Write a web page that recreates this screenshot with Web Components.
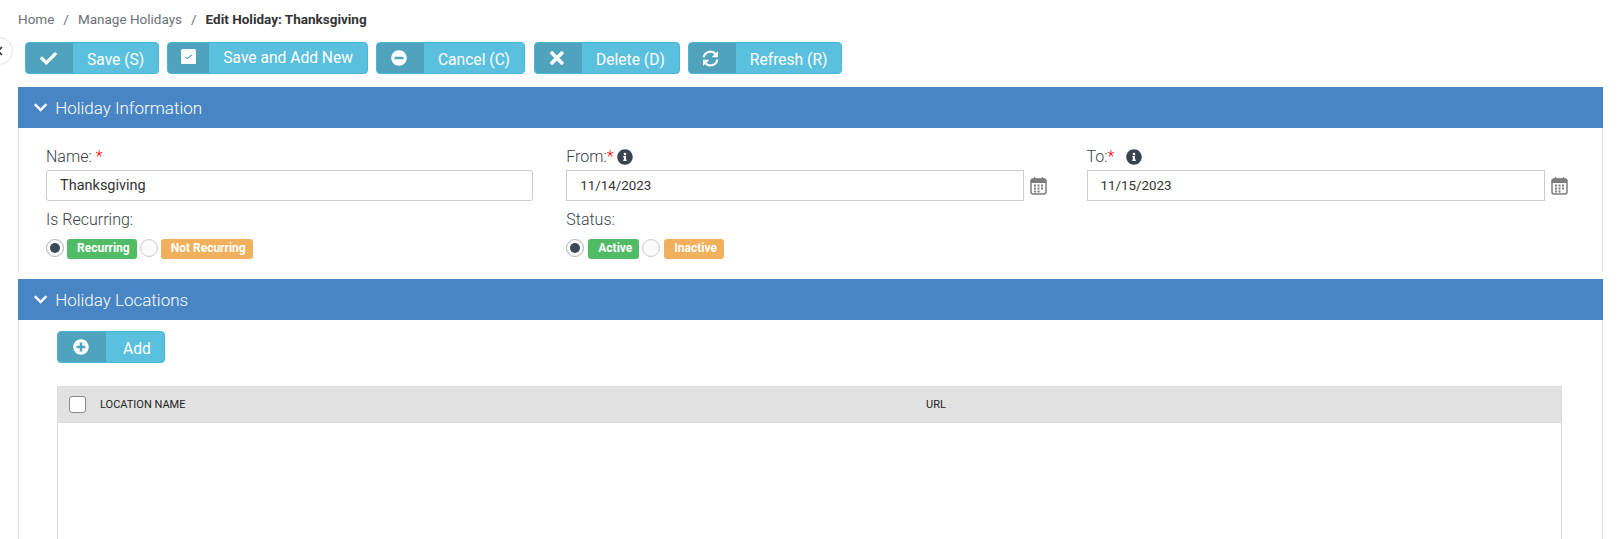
<!DOCTYPE html>
<html>
<head>
<meta charset="utf-8">
<title>Edit Holiday</title>
<style>
html, body { margin: 0; height: 539px; overflow: hidden; background: #fff; }
body { font-family: Roboto, "Liberation Sans", sans-serif; color: #3f4650; position: relative; }
</style>
</head>
<body>
<side-toggle></side-toggle>
<bread-crumbs>
  <a>Home</a><i>/</i>
  <a>Manage Holidays</a><i>/</i>
  <b>Edit Holiday: Thanksgiving</b>
</bread-crumbs>
<tool-bar>
  <icon-button icon="check">Save (S)</icon-button>
  <icon-button icon="checksquare" narrow raised>Save and Add New</icon-button>
  <icon-button icon="minus">Cancel (C)</icon-button>
  <icon-button icon="times" style="margin-left:1px">Delete (D)</icon-button>
  <icon-button icon="sync">Refresh (R)</icon-button>
</tool-bar>
<holiday-panel title="Holiday Information" style="height:185px">
  <form-grid>
    <form-field label="Name:" gap="5" style="padding-right:33px">
      <text-box radius="3" size="14.5">Thanksgiving</text-box>
    </form-field>
    <form-field label="From:" info="3">
      <date-box>11/14/2023</date-box>
    </form-field>
    <form-field label="To:" info="12">
      <date-box>11/15/2023</date-box>
    </form-field>
    <form-field label="Is Recurring:">
      <radio-badge checked color="#51bb66" text="Recurring"></radio-badge>
      <radio-badge color="#f0b05c" text="Not Recurring"></radio-badge>
    </form-field>
    <form-field label="Status:">
      <radio-badge checked color="#51bb66" text="Active" gap="4"></radio-badge>
      <radio-badge color="#f0b05c" text="Inactive" gap="4"></radio-badge>
    </form-field>
  </form-grid>
</holiday-panel>
<holiday-panel title="Holiday Locations" style="margin-top:7px;height:260px">
  <icon-button icon="plus" wide style="margin:11px 0 0 38px">Add</icon-button>
  <location-grid></location-grid>
</holiday-panel>

<script>
var ICONS = {
  check: ["0 0 512 512", "M173.898 439.404l-166.4-166.4c-9.997-9.997-9.997-26.206 0-36.204l36.203-36.204c9.997-9.998 26.207-9.998 36.204 0L192 312.69 432.095 72.596c9.997-9.997 26.207-9.997 36.204 0l36.203 36.204c9.997 9.997 9.997 26.206 0 36.204l-294.4 294.401c-9.998 9.997-26.207 9.997-36.204-.001z", 17],
  minus: ["0 0 512 512", "M256 8C119 8 8 119 8 256s111 248 248 248 248-111 248-248S393 8 256 8zM124 296c-6.6 0-12-5.4-12-12v-56c0-6.6 5.4-12 12-12h264c6.6 0 12 5.4 12 12v56c0 6.6-5.4 12-12 12H124z", 16],
  times: ["0 0 352 512", "M242.72 256l100.07-100.07c12.28-12.28 12.28-32.19 0-44.48l-22.24-22.24c-12.28-12.28-32.19-12.28-44.48 0L176 189.28 75.93 89.21c-12.28-12.28-32.19-12.28-44.48 0L9.21 111.45c-12.28 12.28-12.28 32.19 0 44.48L109.28 256 9.21 356.07c-12.28 12.28-12.28 32.19 0 44.48l22.24 22.24c12.28 12.28 32.2 12.28 44.48 0L176 322.72l100.07 100.07c12.28 12.28 32.2 12.28 44.48 0l22.24-22.24c12.28-12.28 12.28-32.19 0-44.48L242.72 256z", 20],
  plus: ["0 0 512 512", "M256 8C119 8 8 119 8 256s111 248 248 248 248-111 248-248S393 8 256 8zm144 276c0 6.6-5.4 12-12 12h-92v92c0 6.6-5.4 12-12 12h-56c-6.6 0-12-5.4-12-12v-92h-92c-6.6 0-12-5.4-12-12v-56c0-6.6 5.4-12 12-12h92v-92c0-6.6 5.4-12 12-12h56c6.6 0 12 5.4 12 12v92h92c6.6 0 12 5.4 12 12v56z", 16],
  info: ["0 0 512 512", "M256 8C119.043 8 8 119.083 8 256c0 136.997 111.043 248 248 248s248-111.003 248-248C504 119.083 392.957 8 256 8zm0 110c23.196 0 42 18.804 42 42s-18.804 42-42 42-42-18.804-42-42 18.804-42 42-42zm56 254c0 6.627-5.373 12-12 12h-88c-6.627 0-12-5.373-12-12v-24c0-6.627 5.373-12 12-12h12v-64h-12c-6.627 0-12-5.373-12-12v-24c0-6.627 5.373-12 12-12h64c6.627 0 12 5.373 12 12v100h12c6.627 0 12 5.373 12 12v24z", 16],
  chevron: ["0 0 448 512", "M207.029 381.476L12.686 187.132c-9.373-9.373-9.373-24.569 0-33.941l22.667-22.667c9.357-9.357 24.522-9.375 33.901-.04L224 284.505l154.745-154.021c9.379-9.335 24.544-9.317 33.901.04l22.667 22.667c9.373 9.373 9.373 24.569 0 33.941L240.971 381.476c-9.373 9.372-24.569 9.372-33.942 0z", 15]
};

var svg = function(name, size) {
  var d = ICONS[name];
  return `<svg viewBox="${d[0]}" height="${size || d[2]}" fill="currentColor"><path d="${d[1]}"/></svg>`;
};

// square with a small tick, and the thin two-arrow refresh
var GLYPHS = {
  checksquare: `<svg width="15" height="15" viewBox="0 0 15 15"><rect width="15" height="15" rx="1.5" fill="#fff"/><path d="M4.4 7.8 6.4 9.6 10.6 5.8" fill="none" stroke="#4f8fc0" stroke-width="1.1"/></svg>`,
  sync: `<svg width="17" height="17" viewBox="0 0 16 16" fill="currentColor"><path d="M1.6 7A6.4 6.4 0 0 1 12.6 3.6" fill="none" stroke="currentColor" stroke-width="2"/><path d="M15 .9v6h-6z"/><g transform="rotate(180 8 8)"><path d="M1.6 7A6.4 6.4 0 0 1 12.6 3.6" fill="none" stroke="currentColor" stroke-width="2"/><path d="M15 .9v6h-6z"/></g></svg>`
};

class SideToggle extends HTMLElement {
  constructor() {
    super();
    this.attachShadow({ mode: "open" }).innerHTML = `
      <style>
        :host { position: absolute; left: -15px; top: 37px; width: 26px; height: 26px; border: 1px solid #e4e4e4; border-radius: 50%; background: #fff; z-index: 2; }
        svg { position: absolute; right: 9px; top: 8px; width: 6px; height: 10px; fill: none; stroke: #333; stroke-width: 1.6; }
      </style>
      <svg viewBox="0 0 6 10"><path d="M5 1 1 5l4 4"/></svg>`;
  }
}
customElements.define("side-toggle", SideToggle);

class BreadCrumbs extends HTMLElement {
  constructor() {
    super();
    this.attachShadow({ mode: "open" }).innerHTML = `
      <style>
        :host { display: flex; height: 38px; padding-left: 18px; font: 13.5px/38px Roboto, sans-serif; color: #6c7178; }
        ::slotted(i) { font-style: normal; margin: 0 9px; }
        ::slotted(b) { font-weight: 700; color: #333; }
      </style>
      <slot></slot>`;
  }
}
customElements.define("bread-crumbs", BreadCrumbs);

class ToolBar extends HTMLElement {
  constructor() {
    super();
    this.attachShadow({ mode: "open" }).innerHTML = `
      <style>
        :host { display: flex; gap: 8px; margin: 4px 0 13px 25px; height: 32px; }
      </style>
      <slot></slot>`;
  }
}
customElements.define("tool-bar", ToolBar);

class IconButton extends HTMLElement {
  constructor() {
    super();
    var name = this.getAttribute("icon");
    var glyph = GLYPHS[name] || svg(name);
    this.attachShadow({ mode: "open" }).innerHTML = `
      <style>
        :host { display: inline-flex; height: 32px; box-sizing: border-box; border: 1px solid #46b8da; border-radius: 4px; background: #5bc0de; color: #fff; font: 400 15.6px/35px Roboto, sans-serif; overflow: hidden; width: max-content; }
        .icon { width: 47px; box-sizing: border-box; padding-right: 3px; display: flex; align-items: center; justify-content: center; background: #4fa3bd; }
        :host([narrow]) .icon { width: 41px; padding: 0 0 3px 0; }
        :host([wide]) .icon { width: 48px; }
        .text { padding: 0 14px; }
        :host([wide]) .text { padding: 0 13px 0 17px; }
        :host([raised]) .text { line-height: 31px; }
      </style>
      <span class="icon">${glyph}</span><span class="text"><slot></slot></span>`;
  }
}
customElements.define("icon-button", IconButton);

class HolidayPanel extends HTMLElement {
  constructor() {
    super();
    this.attachShadow({ mode: "open" }).innerHTML = `
      <style>
        :host { display: block; margin: 0 17px 0 18px; width: 1585px; box-sizing: border-box; border: solid #ddd; border-width: 0 1px; }
        header { height: 41px; margin: 0 -1px; padding-left: 16px; display: flex; align-items: center; gap: 8px; background: #4785c4; color: #fff; font: 300 17px Roboto, sans-serif; }
        svg { display: block; }
      </style>
      <header>${svg("chevron")}<span>${this.getAttribute("title")}</span></header>
      <slot></slot>`;
  }
}
customElements.define("holiday-panel", HolidayPanel);

class FormGrid extends HTMLElement {
  constructor() {
    super();
    this.attachShadow({ mode: "open" }).innerHTML = `
      <style>
        :host { display: grid; grid-template-columns: repeat(3, 520.25px); grid-auto-rows: 63px; padding: 16px 0 0 27px; }
      </style>
      <slot></slot>`;
  }
}
customElements.define("form-grid", FormGrid);

class FormField extends HTMLElement {
  constructor() {
    super();
    var star = "";
    if (this.hasAttribute("gap")) star = `<i style="margin-left:${this.getAttribute("gap") - 1}px">*</i>`;
    else if (this.hasAttribute("info")) star = "<i>*</i>";
    var info = this.hasAttribute("info")
      ? `<span class="info" style="margin-left:${this.getAttribute("info")}px">${svg("info")}</span>` : "";
    this.attachShadow({ mode: "open" }).innerHTML = `
      <style>
        :host { display: block; }
        .label { display: flex; align-items: center; height: 26px; font: 300 16px/26px Roboto, sans-serif; color: #3a3f47; }
        i { font-style: normal; color: #f00; }
        .info { display: flex; color: #3a4350; }
        .body { display: flex; align-items: flex-start; }
      </style>
      <div class="label"><span>${this.getAttribute("label")}</span>${star}${info}</div>
      <div class="body"><slot></slot></div>`;
  }
}
customElements.define("form-field", FormField);

class TextBox extends HTMLElement {
  constructor() {
    super();
    var size = this.getAttribute("size") || "13.33";
    this.attachShadow({ mode: "open" }).innerHTML = `
      <style>
        :host { display: block; flex: 1; height: 31px; box-sizing: border-box; border: 1px solid #ccc; padding-left: 13px; font: ${size}px/29px Roboto, sans-serif; color: #333; }
      </style>
      <slot></slot>`;
    this.style.borderRadius = (this.getAttribute("radius") || 0) + "px";
  }
}
customElements.define("text-box", TextBox);

class DateBox extends HTMLElement {
  constructor() {
    super();
    this.attachShadow({ mode: "open" }).innerHTML = `
      <style>
        :host { display: flex; align-items: flex-start; width: 481px; }
        .cal { margin: 7px 0 0 6px; color: #7d7d7d; display: block; }
        .box { flex: 1; }
      </style>
      <text-box class="box"><slot></slot></text-box>
      <svg class="cal" width="17" height="18" viewBox="0 0 17 18">
        <rect x="1" y="2" width="15" height="15" rx="2" fill="#fff" stroke="currentColor" stroke-width="1.5"/>
        <path d="M1 3.5a2 2 0 0 1 2-2h11a2 2 0 0 1 2 2V6H1z" fill="currentColor"/>
        <path d="M4.5 0v3M12.5 0v3" stroke="currentColor" stroke-width="1.2"/>
        <path d="M4 7.5h2v2H4zM7.5 7.5h2v2h-2zM11 7.5h2v2h-2zM4 10.5h2v2H4zM7.5 10.5h2v2h-2zM11 10.5h2v2h-2zM4 13.5h2v2H4zM7.5 13.5h2v2h-2z" fill="currentColor"/>
      </svg>`;
  }
}
customElements.define("date-box", DateBox);

class RadioBadge extends HTMLElement {
  constructor() {
    super();
    var gap = this.getAttribute("gap") || 3;
    this.attachShadow({ mode: "open" }).innerHTML = `
      <style>
        :host { display: flex; align-items: flex-start; margin-right: 3px; padding-top: 6px; }
        .dot { width: 18px; height: 18px; box-sizing: border-box; border: 1px solid #ccc; border-radius: 50%; background: #fafafa; display: flex; align-items: center; justify-content: center; }
        :host([checked]) .dot { border-color: #a9b4c2; background: #fff; }
        :host([checked]) .dot::after { content: ""; width: 10px; height: 10px; border-radius: 50%; background: #3f4752; }
        .badge { margin-left: ${gap}px; height: 20px; padding: 0 7px 0 10px; border-radius: 3px; color: #fff; font: 700 12px/19px Roboto, sans-serif; }
      </style>
      <span class="dot"></span>
      <span class="badge" style="background:${this.getAttribute("color")}">${this.getAttribute("text")}</span>`;
  }
}
customElements.define("radio-badge", RadioBadge);

class LocationGrid extends HTMLElement {
  constructor() {
    super();
    this.attachShadow({ mode: "open" }).innerHTML = `
      <style>
        :host { display: block; margin: 23px 40px 0 38px; height: 154px; box-sizing: border-box; border: solid #d8d8d8; border-width: 0 1px; }
        .head { height: 37px; margin: 0 -1px; box-sizing: border-box; border: 1px solid #dcdcdc; background: #e2e2e2; display: grid; grid-template-columns: 42px 826px 1fr; align-items: center; font: 400 11px Roboto, sans-serif; color: #222; }
        .box { width: 17px; height: 17px; box-sizing: border-box; margin-left: 11px; border: 1px solid #8a8a8a; border-radius: 3px; background: #fff; }
      </style>
      <div class="head"><span class="box"></span><span>LOCATION NAME</span><span>URL</span></div>`;
  }
}
customElements.define("location-grid", LocationGrid);
</script>
</body>
</html>
